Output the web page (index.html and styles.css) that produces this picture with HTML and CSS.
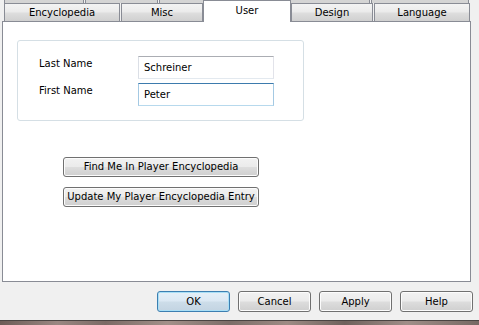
FILE: index.html
```html
<!DOCTYPE html>
<html>
<head>
<meta charset="utf-8">
<link rel="stylesheet" href="styles.css">
</head>
<body>
<div class="tabstrip">
  <div class="tabrow back">
    <div class="ttab w1"></div>
    <div class="ttab w2"></div>
    <div class="ttab w3"></div>
    <div class="ttab w4"></div>
    <div class="ttab w5"></div>
  </div>
  <div class="tabrow front">
    <div class="tab t-enc">Encyclopedia</div>
    <div class="tab t-misc">Misc</div>
    <div class="tab selected">User</div>
    <div class="tab t-design">Design</div>
    <div class="tab t-lang">Language</div>
  </div>
</div>
<div class="panel">
  <div class="group">
    <div class="form-row">
      <label class="lbl" for="ln">Last Name</label>
      <input class="field" id="ln" type="text" value="Schreiner">
    </div>
    <div class="form-row">
      <label class="lbl" for="fn">First Name</label>
      <input class="field focused" id="fn" type="text" value="Peter">
    </div>
  </div>
  <div class="actions">
    <button class="btn wide">Find Me In Player Encyclopedia</button>
    <button class="btn wide">Update My Player Encyclopedia Entry</button>
  </div>
</div>
<div class="footer-buttons">
  <button class="btn dlg default">OK</button>
  <button class="btn dlg">Cancel</button>
  <button class="btn dlg">Apply</button>
  <button class="btn dlg">Help</button>
</div>
<div class="taskstrip"></div>
</body>
</html>
```
FILE: styles.css
```css
html, body {
  margin: 0;
  padding: 0;
}
body {
  width: 479px;
  height: 325px;
  overflow: hidden;
  background: #f0f0f0;
  font-family: "DejaVu Sans", Verdana, sans-serif;
  font-size: 10px;
  color: #000;
  display: flex;
  flex-direction: column;
}

/* tabs */
.tabstrip {
  height: 21px;
  display: flex;
  flex-direction: column;
}
.tabrow {
  display: flex;
  padding-left: 4px;
  gap: 1px;
}
.tabrow.back {
  height: 3px;
  overflow: hidden;
}
.ttab {
  height: 3px;
  box-sizing: border-box;
  border-left: 1px solid #898c95;
  border-right: 1px solid #898c95;
  background: #d4d4d4;
}
.w1 { width: 80px; }
.w2 { width: 73px; }
.w3 { width: 90px; }
.w4 { width: 120px; }
.w5 { width: 98px; }

.tabrow.front {
  height: 18px;
  align-items: flex-end;
}
.tab {
  height: 18px;
  box-sizing: border-box;
  border: 1px solid #898c95;
  border-bottom: none;
  background: linear-gradient(#f3f3f3 0%, #ebebeb 45%, #dddddd 55%, #d0d0d0 100%);
  display: flex;
  align-items: center;
  justify-content: center;
  padding-top: 1px;
  line-height: 12px;
}
.t-enc { width: 116px; }
.t-misc { width: 82px; }
.t-design { width: 82px; }
.t-lang { width: 96px; }
.tab.selected {
  width: 88px;
  height: 22px;
  margin: -3px -1px -1px -1px;
  background: #fff;
  position: relative;
  z-index: 1;
  align-items: flex-start;
  padding-top: 4px;
}

/* panel */
.panel {
  margin-left: 2px;
  width: 469px;
  height: 262px;
  box-sizing: border-box;
  border: 1px solid #898c95;
  background: #fff;
  display: flex;
  flex-direction: column;
  align-items: flex-start;
}
.group {
  margin: 18px 0 0 14px;
  width: 287px;
  height: 81px;
  box-sizing: border-box;
  border: 1px solid #d5dfe5;
  border-radius: 3px;
  padding: 15px 0 0 21px;
  display: flex;
  flex-direction: column;
  gap: 4px;
}
.form-row {
  display: grid;
  grid-template-columns: 99px 136px;
  align-items: start;
}
.lbl {
  line-height: 12px;
  padding-top: 2px;
}
.field {
  width: 136px;
  height: 23px;
  box-sizing: border-box;
  margin: 0;
  border: 1px solid;
  border-color: #abadb3 #e2e3ea #e3e9ef #dbdfe6;
  padding: 0 0 0 5px;
  font-family: inherit;
  font-size: 10px;
  color: #000;
  background: #fff;
  outline: none;
}
.field.focused {
  border-color: #3d7bad #a4c9e3 #b7d9ed #a4c9e3;
}

.actions {
  margin: 36px 0 0 60px;
  display: flex;
  flex-direction: column;
  gap: 10px;
}

/* buttons */
.btn {
  box-sizing: border-box;
  margin: 0;
  padding: 0;
  font-family: inherit;
  font-size: 10px;
  color: #000;
  border: 1px solid #707070;
  border-radius: 3px;
  background: linear-gradient(#f2f2f2 0%, #ebebeb 48%, #dddddd 52%, #cfcfcf 100%);
  box-shadow: inset 0 0 0 1px #fcfcfc;
  line-height: 12px;
}
.btn.wide {
  width: 196px;
  height: 20px;
}
.footer-buttons {
  margin-top: 9px;
  height: 21px;
  display: flex;
  justify-content: flex-end;
  gap: 8px;
  padding-right: 6px;
}
.btn.dlg {
  width: 73px;
  height: 21px;
}
.btn.default {
  border-color: #3c7fb1;
  background: linear-gradient(#e5f0f8 0%, #dbe8f3 48%, #cddde9 52%, #c3d4e2 100%);
  box-shadow: inset 0 0 0 1px #a9dff6;
}

.taskstrip {
  margin-top: 8px;
  height: 4px;
  border-top: 1px solid #4a4442;
  background: linear-gradient(to right, #6d5c57 0%, #9a8782 12%, #7b6a65 22%, #a39089 35%, #7c6d68 48%, #9e8b84 60%, #6f615c 72%, #a08e88 85%, #776863 100%);
}
```
